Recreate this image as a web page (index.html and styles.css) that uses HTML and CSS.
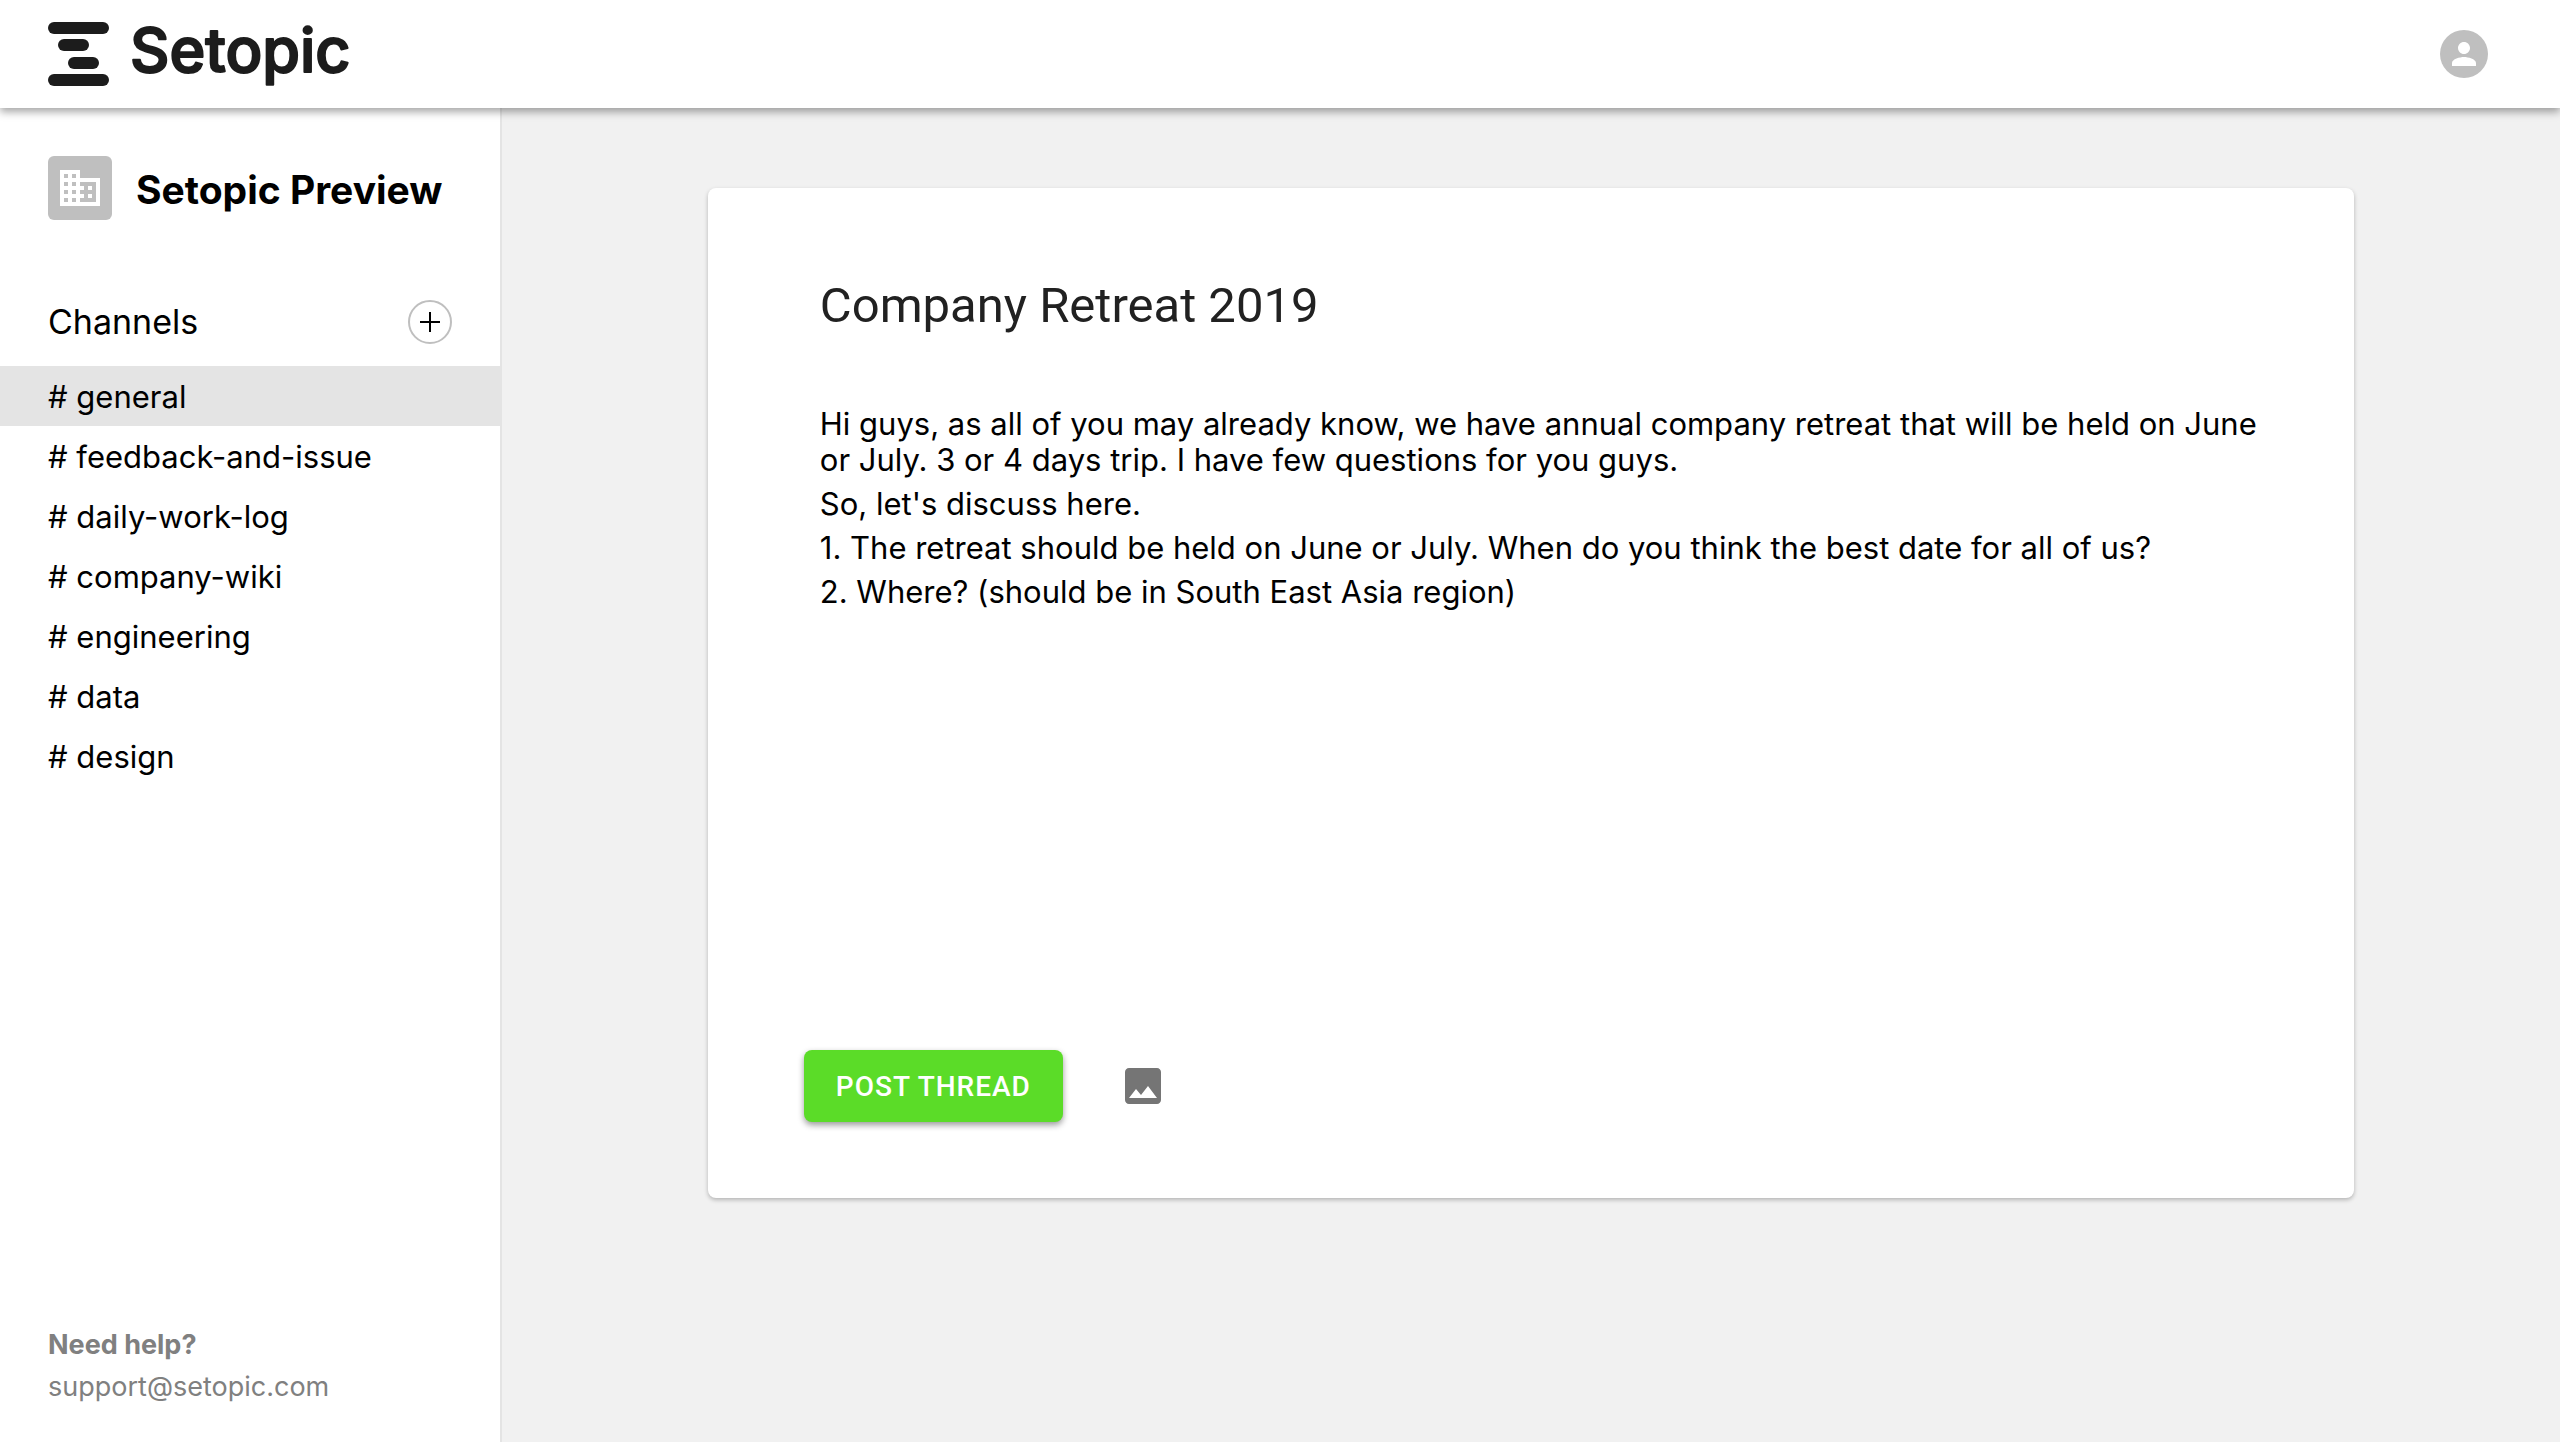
FILE: index.html
```html
<!DOCTYPE html>
<html lang="en">
<head>
    <meta charset="UTF-8">
    <meta name="viewport" content="width=device-width, initial-scale=1.0">
    <title>Setopic</title>
    <link rel="stylesheet" href="styles.css">
</head>
<body>

<header class="header">
    <a href="#" class="logo" aria-label="Setopic">
        <svg width="320" height="100" viewBox="0 -12 320 100">
            <g fill="#1c1c1c">
                <rect x="0" y="6" width="61" height="12" rx="6"/>
                <rect x="10" y="23" width="31" height="12" rx="6"/>
                <rect x="20" y="41" width="31" height="12" rx="6"/>
                <rect x="0" y="58" width="61" height="12" rx="6"/>
            </g>
            <text class="logo-text" x="82" y="56">Setopic</text>
        </svg>
    </a>
    <button class="avatar" aria-label="Account">
        <svg width="36" height="36" viewBox="0 0 24 24" fill="#fff">
            <path d="M12 12c2.21 0 4-1.79 4-4s-1.79-4-4-4-4 1.79-4 4 1.79 4 4 4zm0 2c-2.67 0-8 1.34-8 4v2h16v-2c0-2.66-5.33-4-8-4z"/>
        </svg>
    </button>
</header>

<div class="container">
    <aside class="sidebar">
        <div class="workspace">
            <div class="workspace-icon">
                <svg width="48" height="48" viewBox="0 0 24 24" fill="#fff">
                    <path d="M12 7V3H2v18h20V7H12zM6 19H4v-2h2v2zm0-4H4v-2h2v2zm0-4H4V9h2v2zm0-4H4V5h2v2zm4 12H8v-2h2v2zm0-4H8v-2h2v2zm0-4H8V9h2v2zm0-4H8V5h2v2zm10 12h-8v-2h2v-2h-2v-2h2v-2h-2V9h8v10zm-2-8h-2v2h2v-2zm0 4h-2v2h2v-2z"/>
                </svg>
            </div>
            <h1 class="workspace-name">Setopic Preview</h1>
        </div>

        <div class="channels-header">
            <h2 class="channels-title">Channels</h2>
            <button class="add-button" aria-label="Add channel">
                <svg width="20" height="20" viewBox="0 0 20 20" stroke="#000" stroke-width="2">
                    <path d="M10 0v20M0 10h20"/>
                </svg>
            </button>
        </div>

        <nav class="channels">
            <a href="#" class="channel active"># general</a>
            <a href="#" class="channel"># feedback-and-issue</a>
            <a href="#" class="channel"># daily-work-log</a>
            <a href="#" class="channel"># company-wiki</a>
            <a href="#" class="channel"># engineering</a>
            <a href="#" class="channel"># data</a>
            <a href="#" class="channel"># design</a>
        </nav>

        <div class="help">
            <strong>Need help?</strong>
            <a href="mailto:support@setopic.com">support@setopic.com</a>
        </div>
    </aside>

    <main class="main">
        <form class="card">
            <input type="text" class="title-input" aria-label="Title" value="Company Retreat 2019">
            <div class="editor" contenteditable="true" spellcheck="false" role="textbox" aria-multiline="true" aria-label="Thread">
                <p>Hi guys, as all of you may already know, we have annual company retreat that will be held on June or July. 3 or 4 days trip. I have few questions for you guys.</p>
                <p>So, let's discuss here.</p>
                <p>1. The retreat should be held on June or July. When do you think the best date for all of us?</p>
                <p>2. Where? (should be in South East Asia region)</p>
            </div>
            <div class="actions">
                <button type="button" class="post-button">POST THREAD</button>
                <button type="button" class="image-button" aria-label="Add image">
                    <svg width="48" height="48" viewBox="0 0 24 24" fill="#757575">
                        <path d="M21 19V5c0-1.1-.9-2-2-2H5c-1.1 0-2 .9-2 2v14c0 1.1.9 2 2 2h14c1.1 0 2-.9 2-2zM8.5 13.5l2.5 3.01L14.5 12l4.5 6H5l3.5-4.5z"/>
                    </svg>
                </button>
            </div>
        </form>
    </main>
</div>

</body>
</html>
```
FILE: styles.css
```css
* {
    box-sizing: border-box;
}
body {
    margin: 0;
    min-height: 100vh;
    display: flex;
    flex-direction: column;
    font-family: Inter, "Liberation Sans", sans-serif;
    font-size: 31px;
    color: #000;
    background-color: #f1f1f1;
}
button {
    border: none;
    padding: 0;
    cursor: pointer;
}
svg {
    display: block;
}
h1, h2, p {
    margin: 0;
}

/* Header */
.header {
    position: relative;
    z-index: 1;
    height: 108px;
    padding: 0 72px 0 48px;
    display: flex;
    align-items: center;
    justify-content: space-between;
    background-color: #fff;
    box-shadow: 0 4px 8px rgba(0, 0, 0, 0.35);
}
.logo-text {
    font-size: 61px;
    font-weight: 500;
    fill: #1c1c1c;
    stroke: #1c1c1c;
    stroke-width: 2px;
    stroke-linejoin: round;
}
.avatar {
    width: 48px;
    height: 48px;
    display: flex;
    align-items: center;
    justify-content: center;
    border-radius: 50%;
    background-color: #bfbfbf;
}

/* Sidebar */
.container {
    flex: 1;
    display: flex;
}
.sidebar {
    width: 502px;
    flex-shrink: 0;
    padding: 48px 0 34px;
    display: flex;
    flex-direction: column;
    background-color: #fff;
    border-right: 2px solid #e4e4e4;
}
.workspace {
    padding: 0 48px;
    display: flex;
    align-items: center;
    gap: 24px;
}
.workspace-icon {
    width: 64px;
    height: 64px;
    padding: 8px;
    border-radius: 6px;
    background-color: #bfbfbf;
}
.workspace-name {
    padding-top: 2px;
    font-size: 39px;
    font-weight: 700;
    white-space: nowrap;
}
.channels-header {
    margin-top: 80px;
    padding: 0 48px;
    display: flex;
    align-items: center;
    justify-content: space-between;
}
.channels-title {
    padding-bottom: 2px;
    font-size: 34px;
    font-weight: 400;
}
.add-button {
    width: 44px;
    height: 44px;
    display: flex;
    align-items: center;
    justify-content: center;
    border: 2px solid #bfbfbf;
    border-radius: 50%;
    background-color: #fff;
}
.channels {
    margin-top: 22px;
}
.channel {
    display: block;
    padding: 2px 48px 0;
    line-height: 58px;
    color: #000;
    text-decoration: none;
}
.channel.active {
    background-color: #e4e4e4;
}
.help {
    margin-top: auto;
    padding: 0 48px;
    display: flex;
    flex-direction: column;
    font-size: 27px;
    line-height: 42px;
    color: #808080;
}
.help strong {
    font-weight: 700;
}
.help a {
    color: #808080;
    text-decoration: none;
}

/* Thread form */
.main {
    flex: 1;
    padding: 80px 0;
}
.card {
    width: 80%;
    margin: 0 auto;
    padding: 80px 96px 64px 112px;
    display: flex;
    flex-direction: column;
    background-color: #fff;
    border-radius: 8px;
    box-shadow: 0 2px 4px rgba(0, 0, 0, 0.25);
}
.title-input {
    width: 100%;
    padding: 0;
    border: none;
    outline: none;
    font-family: Roboto, sans-serif;
    font-size: 49px;
    line-height: 76px;
    color: #212121;
    background: none;
}
.editor {
    min-height: 562px;
    margin-top: 62px;
    line-height: 36px;
    outline: none;
}
.editor p {
    margin-bottom: 8px;
}
.actions {
    margin: 70px 0 0 -16px;
    display: flex;
    align-items: center;
    gap: 32px;
}
.post-button {
    height: 72px;
    padding: 0 32px;
    font-family: Roboto, sans-serif;
    font-size: 28px;
    font-weight: 500;
    letter-spacing: 1px;
    color: #fff;
    background-color: #5bdc28;
    border-radius: 8px;
    box-shadow: 0 3px 6px rgba(0, 0, 0, 0.4);
}
.image-button {
    padding: 24px;
    background: none;
}
```
